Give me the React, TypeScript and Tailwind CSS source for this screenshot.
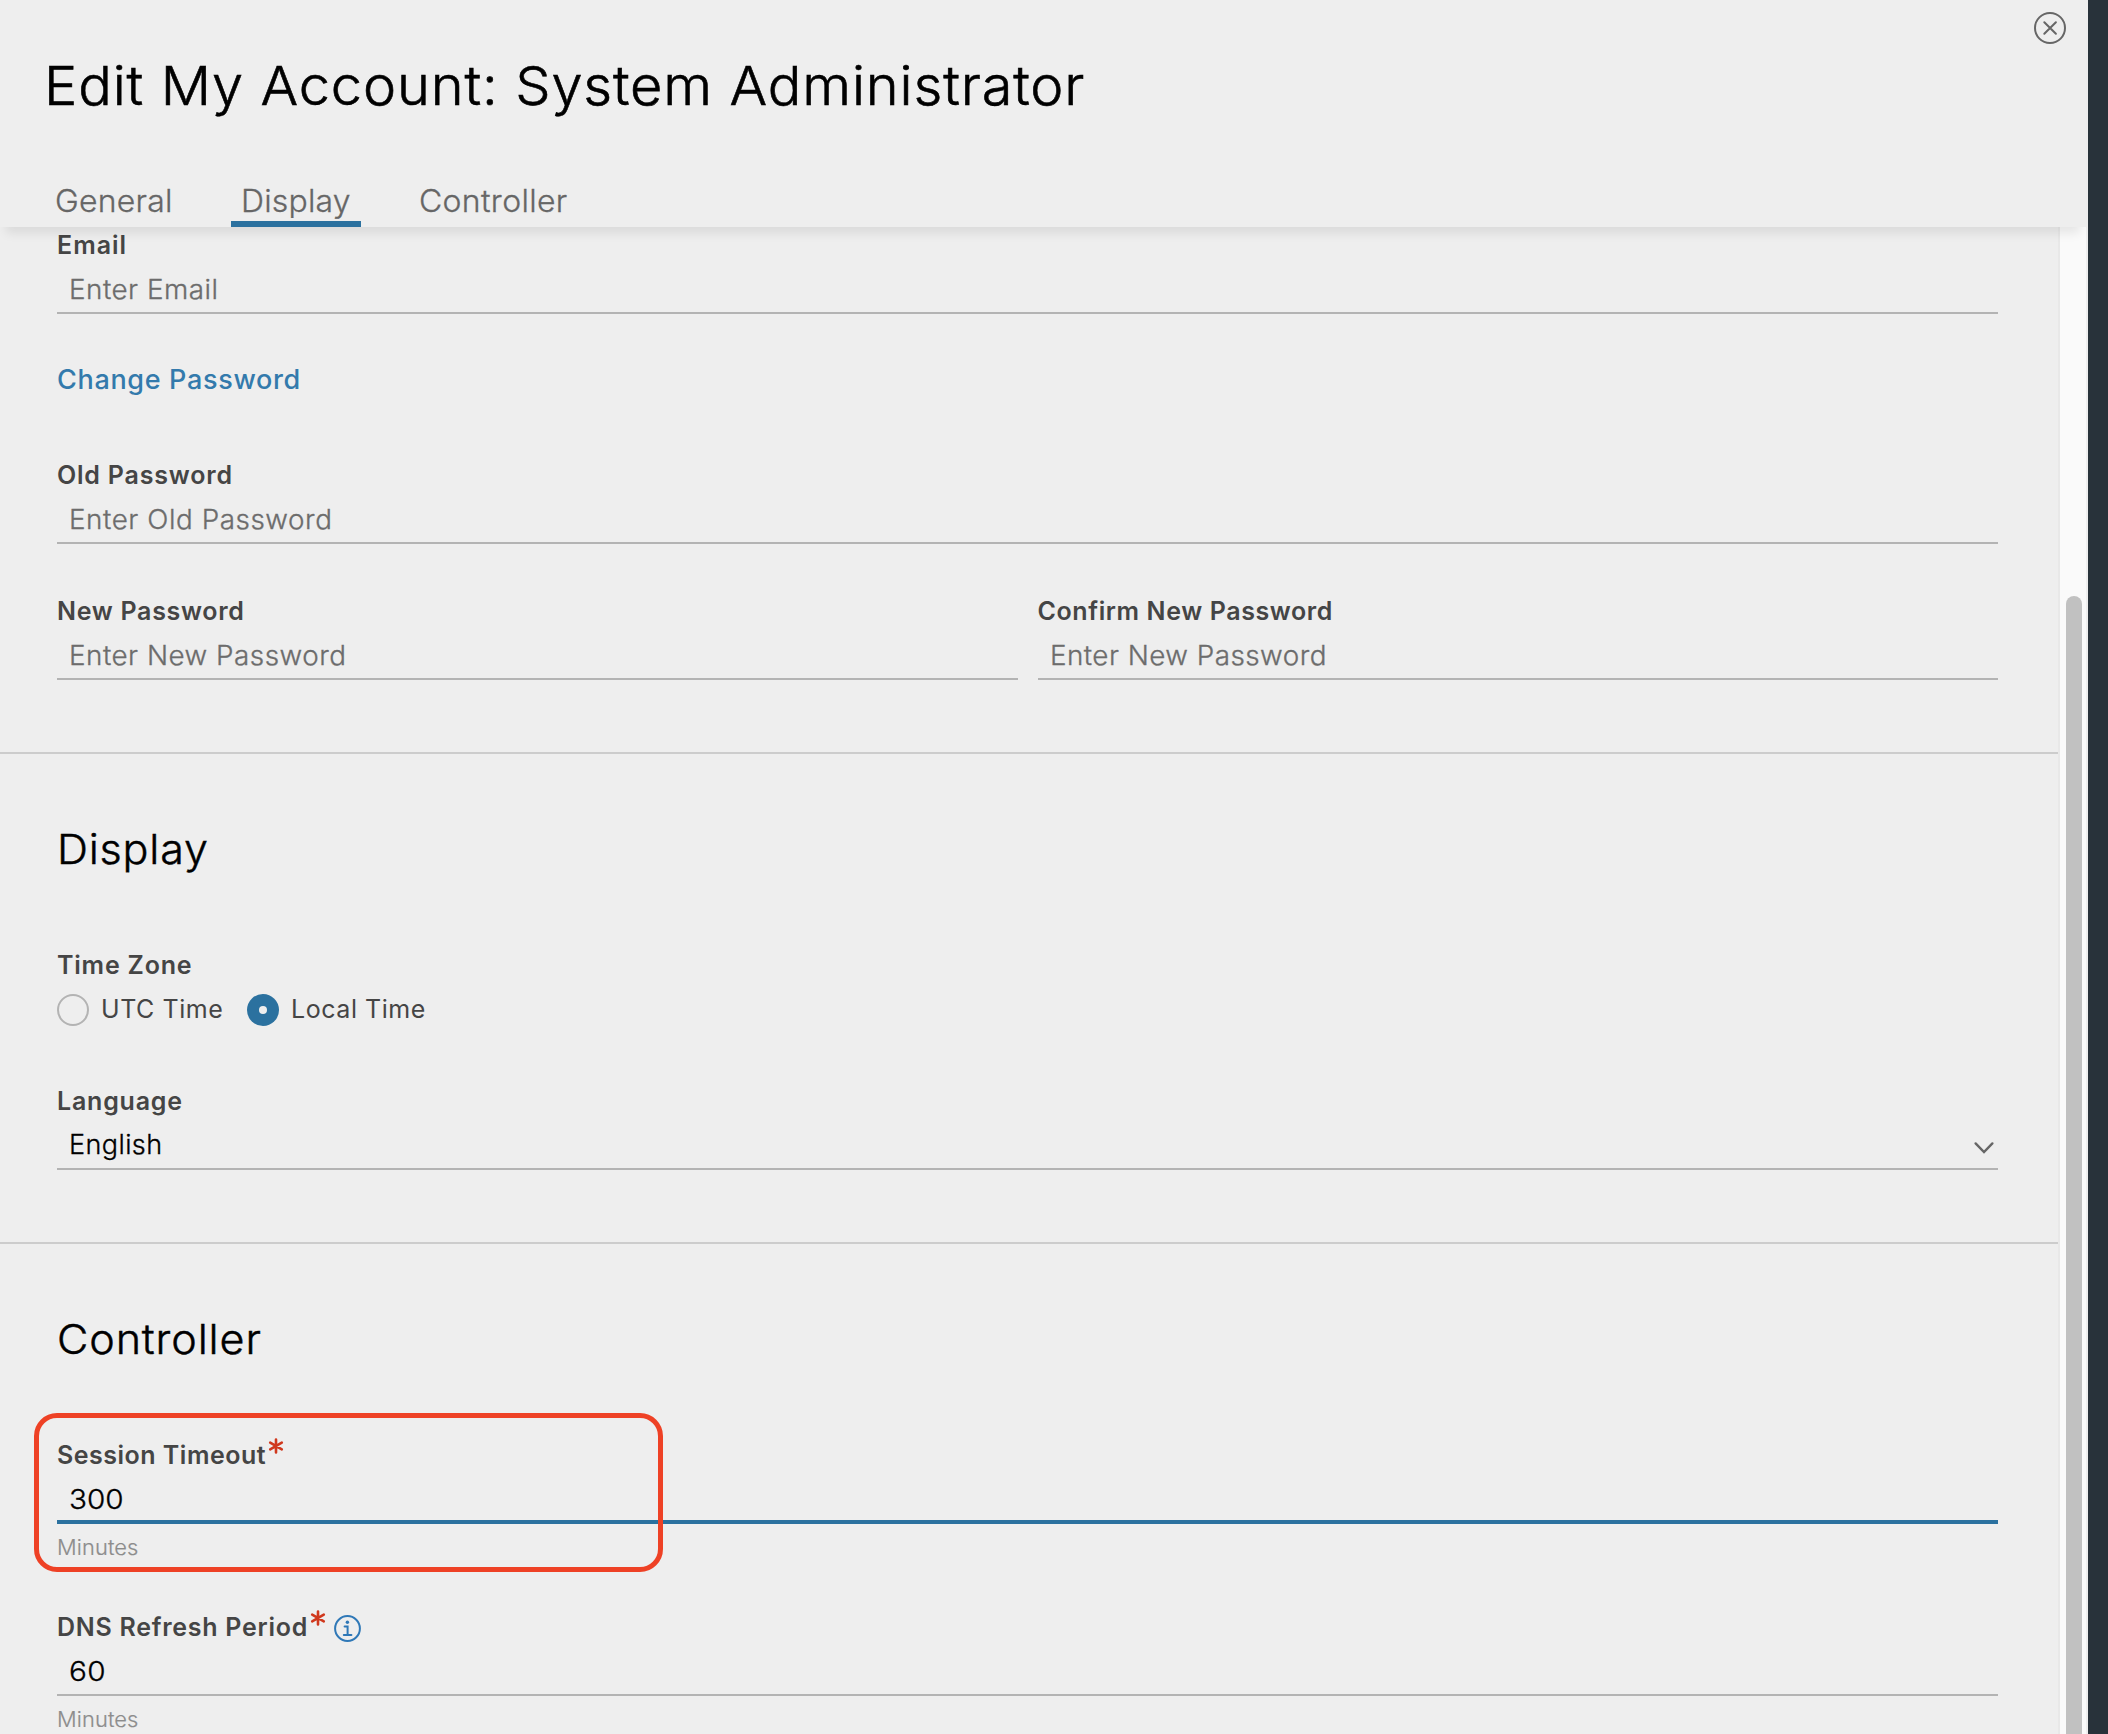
import React from "react";

const tabs = [
  { label: "General", box: "w-[145px] pl-[13px] border-transparent", text: "tracking-[0.25px]" },
  { label: "Display", box: "ml-[44px] w-[130px] pl-[10px] border-[#2b719f]", text: "tracking-[0.2px]" },
  { label: "Controller", box: "ml-[46px] w-[172px] pl-[12px] border-transparent", text: "tracking-[0.33px]" },
];

function CloseIcon() {
  return (
    <svg className="block size-8" viewBox="0 0 32 32" fill="none" stroke="#666" strokeWidth="2">
      <circle cx="16" cy="16" r="15" />
      <path d="M10.3 10.2l11.6 11.6M21.9 10.2L10.3 21.8" strokeLinecap="round" />
    </svg>
  );
}

function Asterisk() {
  return (
    <svg className="mt-[-2px] ml-0.5 block h-4 w-4 shrink-0" viewBox="0 0 16 16" stroke="#d0381d" strokeWidth="2.6" strokeLinecap="round">
      <path d="M8 1.5v13M2.2 4.7l11.6 6.6M13.8 4.7l-11.6 6.6" />
    </svg>
  );
}

function InfoIcon() {
  return (
    <svg className="mt-[2.5px] ml-[8.5px] block size-[27px] shrink-0" viewBox="0 0 27 27" fill="none" stroke="#2f78b7" strokeWidth="2">
      <circle cx="13.5" cy="13.5" r="12.4" />
      <path d="M10.6 11.6h3v8.4M9.8 20h7.6" strokeLinecap="round" />
      <circle cx="13.4" cy="7.2" r="1.7" fill="#2f78b7" stroke="none" />
    </svg>
  );
}

function Label({ text, className, children }: { text: string; className: string; children?: React.ReactNode }) {
  return (
    <div className="flex h-[30px]">
      <span className={`text-[25px] leading-[30px] font-semibold whitespace-nowrap text-[#454545] ${className}`}>{text}</span>
      {children}
    </div>
  );
}

function Field({
  label,
  labelClass,
  extra,
  value,
  valueClass,
  focused = false,
  hint,
}: {
  label: string;
  labelClass: string;
  extra?: React.ReactNode;
  value: string;
  valueClass: string;
  focused?: boolean;
  hint?: string;
}) {
  return (
    <div className="flex-1">
      <Label text={label} className={labelClass}>
        {extra}
      </Label>
      <div
        className={
          focused
            ? "mt-[14px] border-b-4 border-[#2b719f] pb-1 pl-3"
            : "mt-[14px] border-b-2 border-[#b3b3b3] pb-1.5 pl-3"
        }
      >
        <span className={`block origin-left text-[27px] leading-8 font-light whitespace-nowrap [-webkit-text-stroke:0.3px] ${valueClass}`}>{value}</span>
      </div>
      {hint && (
        <p className="mt-3 -mb-px origin-left scale-x-[1.04] text-[21px] leading-6 font-light tracking-[0.1px] text-[#8c8c8c] [-webkit-text-stroke:0.2px]">{hint}</p>
      )}
    </div>
  );
}

export default function App() {
  return (
    <div className="flex h-[1734px] w-[2108px] overflow-hidden bg-[#28323a] font-['Inter',sans-serif]">
      <div className="flex h-full w-[2088px] flex-col bg-[#eee]">
        <header className="relative z-10 h-[227px] w-[2086px] shrink-0 bg-[#eee] pt-[54px] shadow-[0_12px_10px_-6px_rgba(0,0,0,0.085)]">
          <h1 className="ml-[43.5px] origin-left scale-x-[1.035] text-[54px] leading-[64px] font-light tracking-[0.83px] whitespace-nowrap text-black [-webkit-text-stroke:0.6px]">
            Edit My Account: System Administrator
          </h1>
          <button className="absolute top-3 right-5">
            <CloseIcon />
          </button>
          <nav className="mt-[65px] ml-[42px] flex">
            {tabs.map((t) => (
              <a key={t.label} className={`block border-b-[6px] pb-0.5 text-[31px] leading-9 font-light text-[#666] [-webkit-text-stroke:0.3px] ${t.box}`}>
                <span className={`inline-block origin-left scale-x-[1.03] ${t.text}`}>{t.label}</span>
              </a>
            ))}
          </nav>
        </header>

        <div className="flex min-h-0 flex-1">
          <main className="w-[2058px] overflow-hidden">
            <section className="border-b-2 border-[#ccc] pt-[3px] pr-[60px] pb-[72px] pl-[57px]">
              <Field label="Email" labelClass="tracking-[1px]" value="Enter Email" valueClass="scale-x-[1.03] text-[#6c6c6c] tracking-[0.48px]" />
              <a className="mt-[50px] block text-[27px] leading-8 font-medium tracking-[0.67px] text-[#337aac]">Change Password</a>
              <div className="mt-[64px]">
                <Field label="Old Password" labelClass="tracking-[0.8px]" value="Enter Old Password" valueClass="scale-x-[1.03] text-[#6c6c6c] tracking-[0.54px]" />
              </div>
              <div className="mt-[52px] flex gap-5">
                <Field label="New Password" labelClass="tracking-[0.7px]" value="Enter New Password" valueClass="scale-x-[1.03] text-[#6c6c6c] tracking-[0.48px]" />
                <Field label="Confirm New Password" labelClass="tracking-[0.6px]" value="Enter New Password" valueClass="scale-x-[1.03] text-[#6c6c6c] tracking-[0.45px]" />
              </div>
            </section>

            <section className="border-b-2 border-[#ccc] pt-[71px] pr-[60px] pb-[72px] pl-[57px]">
              <h2 className="origin-left scale-x-[1.05] text-[41px] leading-[48px] font-light tracking-[0.75px] text-black [-webkit-text-stroke:0.45px]">Display</h2>
              <div className="mt-[77px]">
                <Label text="Time Zone" className="tracking-[0.78px]" />
                <div className="mt-[14px] flex h-8 text-[25px] leading-[30px] text-[#454545]">
                  <span className="size-8 rounded-full border-2 border-[#b3b3b3]" />
                  <span className="ml-3 w-[146px] tracking-[0.55px]">UTC Time</span>
                  <span className="flex size-8 items-center justify-center rounded-full bg-[#2b719f]">
                    <span className="size-2 rounded-full bg-[#eee]" />
                  </span>
                  <span className="ml-3 tracking-[0.55px]">Local Time</span>
                </div>
              </div>
              <div className="mt-[60px]">
                <Label text="Language" className="tracking-[0.78px]" />
                <div className="mt-[14px] flex justify-between border-b-2 border-[#b3b3b3] pr-[3px] pb-2 pl-3">
                  <span className="text-[27px] leading-[30px] font-light tracking-[0.4px] text-black [-webkit-text-stroke:0.3px]">English</span>
                  <svg className="mt-[10px] block h-4 w-[22px]" viewBox="0 0 22 16" fill="none" stroke="#666" strokeWidth="2.4" strokeLinecap="round">
                    <path d="M2.6 3.4l8.4 8.6 8.4-8.6" />
                  </svg>
                </div>
              </div>
            </section>

            <section className="relative pt-[71px] pr-[60px] pl-[57px]">
              <h2 className="origin-left scale-x-[1.05] text-[41px] leading-[48px] font-light tracking-[0.85px] text-black [-webkit-text-stroke:0.45px]">Controller</h2>
              <div className="mt-[77px]">
                <Field
                  label="Session Timeout"
                  labelClass="tracking-[0.5px]"
                  extra={<Asterisk />}
                  value="300"
                  valueClass="scale-x-110 text-black"
                  focused
                  hint="Minutes"
                />
              </div>
              <div className="mt-[53px]">
                <Field
                  label="DNS Refresh Period"
                  labelClass="tracking-[0.73px]"
                  extra={
                    <>
                      <Asterisk />
                      <InfoIcon />
                    </>
                  }
                  value="60"
                  valueClass="scale-x-110 tracking-[0.3px] text-black"
                  hint="Minutes"
                />
              </div>
              <div className="absolute top-[168.5px] left-[33.5px] h-[159px] w-[629px] rounded-[23px] border-[5px] border-[#ee4125]" />
            </section>
          </main>

          <div className="flex w-7 border-l-2 border-[#e8e8e8] bg-[#fafafa] pt-[369px] pl-1.5">
            <div className="w-4 rounded-t-full bg-[#c1c1c1]" />
          </div>
          <div className="w-0.5 bg-[#eee]" />
        </div>
      </div>
    </div>
  );
}
